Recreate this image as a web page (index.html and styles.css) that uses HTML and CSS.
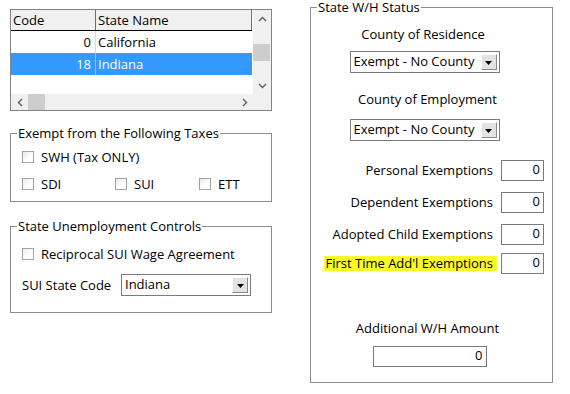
FILE: index.html
```html
<!DOCTYPE html>
<html>
<head>
<meta charset="utf-8">
<title>State Tax Settings</title>
<link rel="stylesheet" href="styles.css">
</head>
<body>
<div class="page">
  <div class="left">
    <div class="grid">
      <div class="grid-body">
        <div class="grid-head">
          <div class="cell c-code">Code</div>
          <div class="cell c-name">State Name</div>
        </div>
        <div class="grid-row">
          <div class="cell c-code">0</div>
          <div class="cell c-name">California</div>
        </div>
        <div class="grid-row selected">
          <div class="cell c-code">18</div>
          <div class="cell c-name">Indiana</div>
        </div>
      </div>
      <div class="vscroll">
        <div class="sb-btn"><svg width="9" height="6" viewBox="0 0 9 6"><path d="M1 5L4.5 1.5L8 5" fill="none" stroke="#606060" stroke-width="1.4"/></svg></div>
        <div class="vgap"></div>
        <div class="vthumb"></div>
        <div class="vtrack"></div>
        <div class="sb-btn"><svg width="9" height="6" viewBox="0 0 9 6"><path d="M1 1L4.5 4.5L8 1" fill="none" stroke="#606060" stroke-width="1.4"/></svg></div>
      </div>
      <div class="hscroll">
        <div class="sb-btn"><svg width="6" height="9" viewBox="0 0 6 9"><path d="M5 1L1.5 4.5L5 8" fill="none" stroke="#606060" stroke-width="1.4"/></svg></div>
        <div class="hthumb"></div>
        <div class="htrack"></div>
        <div class="sb-btn"><svg width="6" height="9" viewBox="0 0 6 9"><path d="M1 1L4.5 4.5L1 8" fill="none" stroke="#606060" stroke-width="1.4"/></svg></div>
      </div>
      <div class="corner"></div>
    </div>

    <fieldset class="group exempt">
      <legend class="group-title">Exempt from the Following Taxes</legend>
      <div class="group-body">
        <div class="check-row">
          <label class="check"><span class="box"></span>SWH (Tax ONLY)</label>
        </div>
        <div class="check-grid">
          <label class="check"><span class="box"></span>SDI</label>
          <label class="check"><span class="box"></span>SUI</label>
          <label class="check"><span class="box"></span>ETT</label>
        </div>
      </div>
    </fieldset>

    <fieldset class="group suc">
      <legend class="group-title">State Unemployment Controls</legend>
      <div class="group-body">
        <div class="check-row">
          <label class="check"><span class="box"></span>Reciprocal SUI Wage Agreement</label>
        </div>
        <div class="field-row">
          <span class="field-label">SUI State Code</span>
          <div class="select sui-select">
            <span class="select-text">Indiana</span>
            <span class="select-btn"><svg width="7" height="4" viewBox="0 0 7 4"><path d="M0 0H7L3.5 4Z" fill="#000"/></svg></span>
          </div>
        </div>
      </div>
    </fieldset>
  </div>

  <fieldset class="group wh">
    <legend class="group-title">State W/H Status</legend>
    <div class="group-body">
      <span class="center-label res-label">County of Residence</span>
      <div class="select county-select sel-res">
        <span class="select-text">Exempt - No County</span>
        <span class="select-btn"><svg width="7" height="4" viewBox="0 0 7 4"><path d="M0 0H7L3.5 4Z" fill="#000"/></svg></span>
      </div>
      <span class="center-label emp-label">County of Employment</span>
      <div class="select county-select sel-emp">
        <span class="select-text">Exempt - No County</span>
        <span class="select-btn"><svg width="7" height="4" viewBox="0 0 7 4"><path d="M0 0H7L3.5 4Z" fill="#000"/></svg></span>
      </div>

      <div class="ex-row first">
        <span class="ex-label">Personal Exemptions</span>
        <div class="num-input">0</div>
      </div>
      <div class="ex-row">
        <span class="ex-label">Dependent Exemptions</span>
        <div class="num-input">0</div>
      </div>
      <div class="ex-row">
        <span class="ex-label">Adopted Child Exemptions</span>
        <div class="num-input">0</div>
      </div>
      <div class="ex-row tight">
        <span class="ex-label hl">First Time Add'l Exemptions</span>
        <div class="num-input">0</div>
      </div>

      <span class="center-label add-label">Additional W/H Amount</span>
      <div class="num-input add-input">0</div>
    </div>
  </fieldset>
</div>
</body>
</html>
```

FILE: styles.css
```css
* { box-sizing: border-box; }
html, body { margin: 0; background: #fff; }
body {
  font-family: "Open Sans", "Noto Sans", sans-serif;
  font-size: 13px;
  line-height: 16px;
  color: #000;
  width: 570px;
  height: 394px;
  overflow: hidden;
}

.page { display: flex; align-items: flex-start; padding-left: 10px; }
.left { width: 262px; flex: none; padding-top: 9px; display: flex; flex-direction: column; }

/* grid */
.grid {
  display: grid;
  grid-template-columns: 242px 18px;
  grid-template-rows: 84px 16px;
  height: 102px;
  border: 1px solid #848484;
}
.grid-body { background: #fff; overflow: hidden; }
.grid-head { display: flex; height: 21px; border-bottom: 1px solid #000; background: #f0f0f0; margin-right: 1px; }
.grid-head .cell { border-right: 1px solid #6e6e6e; line-height: 20px; padding-left: 2px; }
.c-code { width: 85px; flex: none; }
.c-name { flex: 1; white-space: nowrap; }
.grid-row { display: flex; height: 22px; line-height: 22px; margin-right: 1px; }
.grid-row .c-code { text-align: right; padding-right: 4px; border-right: 1px solid #d9d9d9; }
.grid-row .c-name { padding-left: 2px; }
.grid-row.selected { background: #3399ff; color: #fff; }
.grid-row.selected .c-code { border-right-color: #92c6f8; }

.vscroll { background: #f0f0f0; display: flex; flex-direction: column; }
.sb-btn { flex: none; display: flex; align-items: center; justify-content: center; height: 17px; }
.vgap { height: 17px; flex: none; }
.vthumb { height: 17px; flex: none; background: #cdcdcd; margin: 0 1px 0 0; }
.vtrack { flex: 1; }
.hscroll { background: #f0f0f0; display: flex; }
.hscroll .sb-btn { width: 17px; height: auto; }
.hthumb { width: 17px; flex: none; background: #cdcdcd; }
.htrack { flex: 1; }
.corner { background: #f0f0f0; }

/* group boxes */
.group { margin: 0; padding: 0; border: 1px solid #8c8c8c; min-width: 0; }
.group-title { margin-left: 6px; padding: 0 1px; font-size: 13px; line-height: 14px; color: #000; }

.check { display: flex; align-items: center; white-space: nowrap; }
.box {
  width: 12px; height: 12px; flex: none;
  border: 1px solid #a3a3a3;
  background: linear-gradient(135deg, #e9e9e9, #fff 60%);
  margin-right: 7px;
}
.check-row { display: flex; align-items: center; height: 20px; }
.check-grid { display: grid; grid-template-columns: 93px 84px auto; height: 20px; }

.exempt { margin-top: 15px; }
.exempt .group-body { padding: 7px 0 7px 11px; display: flex; flex-direction: column; gap: 7px; }

.suc { margin-top: 17px; }
.suc .group-body { padding: 11px 0 16px 11px; display: flex; flex-direction: column; gap: 10px; }
.field-row { display: flex; align-items: center; height: 22px; }
.field-label { width: 99px; flex: none; }

/* combo boxes */
.select {
  display: flex; align-items: flex-start;
  height: 22px;
  border: 1px solid #7a7a7a;
  background: #fff;
  padding-left: 3px;
}
.select-text { flex: 1; line-height: 16px; padding-top: 1px; white-space: nowrap; }
.select-btn {
  flex: none;
  width: 16px; height: 16px;
  margin: 2px 2px 0 0;
  display: flex; align-items: center; justify-content: center;
  padding-top: 1px;
  background: #e3e3e3;
  border: 1px solid;
  border-color: #fdfdfd #8a8a8a #8a8a8a #fdfdfd;
}
.sui-select { width: 130px; }

/* W/H status */
.wh { width: 243px; flex: none; margin-left: 38px; }
.wh .group-body { display: flex; flex-direction: column; padding: 0 8px 15px 0; }
.center-label { align-self: center; line-height: 16px; white-space: nowrap; }
.res-label { margin-top: 12px; margin-right: 9px; }
.emp-label { margin-top: 18px; }
.county-select { width: 150px; align-self: center; margin-right: 6px; }
.sel-res { margin-top: 9px; }
.sel-emp { margin-top: 12px; }

.ex-row { display: flex; justify-content: flex-end; align-items: center; gap: 4px; margin-top: 11px; }
.ex-row.first { margin-top: 19px; }
.ex-row.tight { margin-top: 8px; }
.ex-label { padding: 0 4px 0 1px; line-height: 15px; white-space: nowrap; }
.hl { background: #f8f82c; }

.num-input {
  width: 43px; height: 21px;
  border: 1px solid #7a7a7a;
  background: #fff;
  text-align: right;
  padding-right: 3px;
  line-height: 16px;
}
.add-label { margin-top: 46px; }
.add-input { width: 114px; align-self: center; margin-left: 4px; margin-top: 10px; }
```
